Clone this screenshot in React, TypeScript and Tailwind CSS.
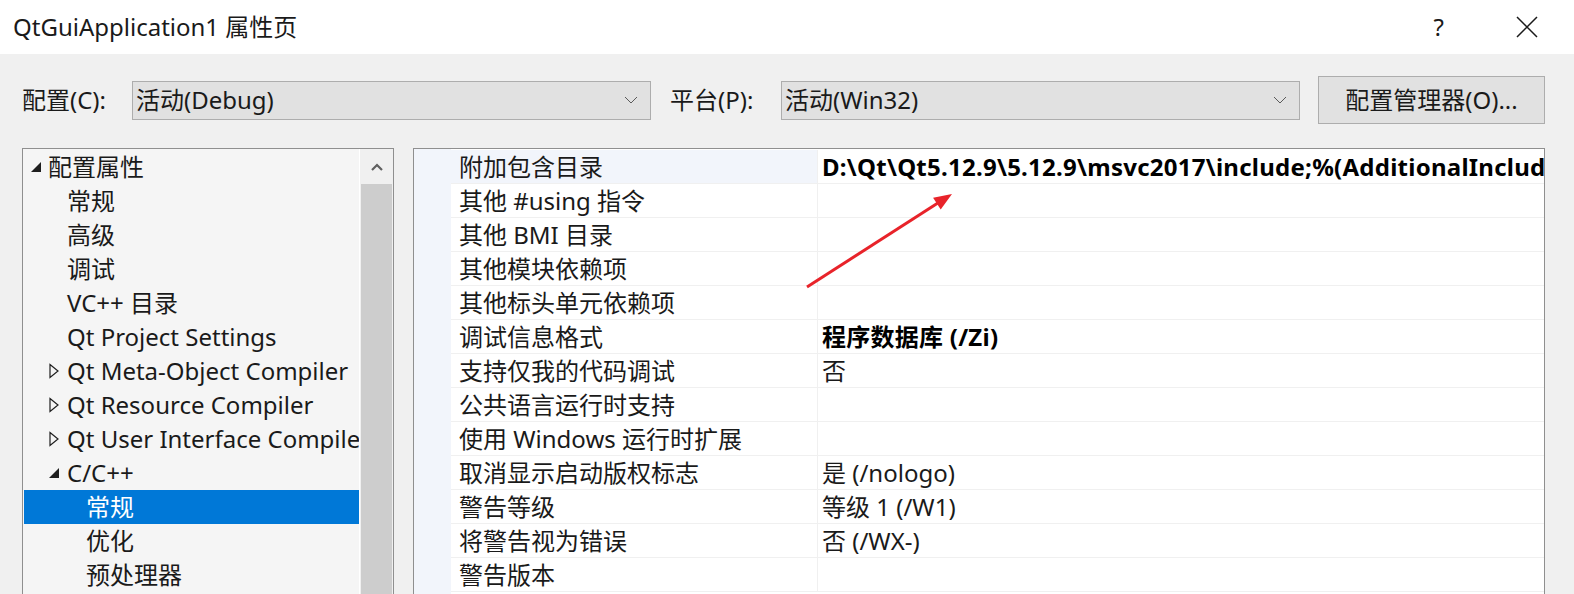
import React from "react";

type TreeItem = {
  label: string;
  level: number;
  expander?: "open" | "closed";
  selected?: boolean;
};

type Prop = {
  name: string;
  value?: string;
  bold?: boolean;
};

const tree: TreeItem[] = [
  { label: "配置属性", level: 0, expander: "open" },
  { label: "常规", level: 1 },
  { label: "高级", level: 1 },
  { label: "调试", level: 1 },
  { label: "VC++ 目录", level: 1 },
  { label: "Qt Project Settings", level: 1 },
  { label: "Qt Meta-Object Compiler", level: 1, expander: "closed" },
  { label: "Qt Resource Compiler", level: 1, expander: "closed" },
  { label: "Qt User Interface Compiler", level: 1, expander: "closed" },
  { label: "C/C++", level: 1, expander: "open" },
  { label: "常规", level: 2, selected: true },
  { label: "优化", level: 2 },
  { label: "预处理器", level: 2 },
];

const props: Prop[] = [
  {
    name: "附加包含目录",
    value: "D:\\Qt\\Qt5.12.9\\5.12.9\\msvc2017\\include;%(AdditionalIncludeDirectories)",
    bold: true,
  },
  { name: "其他 #using 指令" },
  { name: "其他 BMI 目录" },
  { name: "其他模块依赖项" },
  { name: "其他标头单元依赖项" },
  { name: "调试信息格式", value: "程序数据库 (/Zi)", bold: true },
  { name: "支持仅我的代码调试", value: "否" },
  { name: "公共语言运行时支持" },
  { name: "使用 Windows 运行时扩展" },
  { name: "取消显示启动版权标志", value: "是 (/nologo)" },
  { name: "警告等级", value: "等级 1 (/W1)" },
  { name: "将警告视为错误", value: "否 (/WX-)" },
  { name: "警告版本" },
];

function Chevron() {
  return (
    <svg width="14" height="8" viewBox="0 0 14 8" className="shrink-0">
      <polyline points="1,1 7,7 13,1" fill="none" stroke="#5a5a5a" strokeWidth="1" />
    </svg>
  );
}

function Combo({ text, width }: { text: string; width: string }) {
  return (
    <div
      className={`${width} h-[39px] flex items-center justify-between border border-[#adadad] bg-[#e1e1e1] pl-[3px] pr-[12px] text-[24px] leading-none`}
    >
      <span>{text}</span>
      <Chevron />
    </div>
  );
}

function Expander({ kind }: { kind: "open" | "closed" }) {
  if (kind === "open") {
    return (
      <svg width="12" height="12" viewBox="0 0 12 12" className="shrink-0">
        <polygon points="11,1 11,11 1,11" fill="#1e1e1e" />
      </svg>
    );
  }
  return (
    <svg width="12" height="16" viewBox="0 0 12 16" className="shrink-0">
      <polygon points="2,1.5 10,8 2,14.5" fill="none" stroke="#1e1e1e" strokeWidth="1.2" />
    </svg>
  );
}

export default function App() {
  return (
    <div
      className="relative w-[1574px] h-[594px] overflow-hidden bg-[#f0f0f0] text-[#1a1a1a]"
      style={{ fontFamily: "'Noto Sans', 'Noto Sans CJK SC', sans-serif" }}
    >
      {/* title bar */}
      <div className="h-[54px] bg-white flex items-center pl-[13px] pr-[36px]">
        <span className="text-[24px] leading-none">QtGuiApplication1 属性页</span>
        <span className="ml-auto text-[24px] leading-none mr-[72px]">?</span>
        <svg width="22" height="22" viewBox="0 0 22 22">
          <path d="M1 1 L21 21 M21 1 L1 21" stroke="#1a1a1a" strokeWidth="1.5" />
        </svg>
      </div>

      {/* config row */}
      <div className="h-[94px] flex items-center pl-[22px] pr-[29px] pb-[2px]">
        <span className="w-[110px] text-[24px] leading-none">配置(C):</span>
        <Combo text="活动(Debug)" width="w-[519px]" />
        <span className="ml-[19px] w-[111px] text-[24px] leading-none">平台(P):</span>
        <Combo text="活动(Win32)" width="w-[519px]" />
        <div className="ml-auto w-[227px] h-[48px] flex items-center justify-center border border-[#adadad] bg-[#e1e1e1] text-[24px] leading-none">
          配置管理器(O)...
        </div>
      </div>

      {/* panels */}
      <div className="flex pl-[22px] pr-[29px] gap-[19px]">
        {/* tree */}
        <div className="w-[372px] shrink-0 h-[460px] border border-[#8f8f8f] bg-[#f5f5f5] flex">
          <div className="flex-1 min-w-0 pt-[1px] pl-[1px] overflow-hidden">
            {tree.map((item, i) => (
              <div
                key={i}
                className={`h-[34px] flex items-center whitespace-nowrap text-[24px] leading-none ${
                  item.selected ? "bg-[#0078d7] text-white" : ""
                }`}
                style={{ paddingLeft: item.level === 0 ? 6 : item.level === 1 ? 24 : 62 }}
              >
                {item.level === 0 && item.expander && (
                  <span className="w-[18px] shrink-0 flex items-center">
                    <Expander kind={item.expander} />
                  </span>
                )}
                {item.level === 1 && (
                  <span className="w-[19px] shrink-0 flex items-center">
                    {item.expander && <Expander kind={item.expander} />}
                  </span>
                )}
                <span>{item.label}</span>
              </div>
            ))}
          </div>
          <div className="w-[34px] shrink-0 border-l border-white bg-[#f0f0f0] flex flex-col">
            <div className="h-[35px] flex items-center justify-center">
              <svg width="12" height="8" viewBox="0 0 12 8">
                <polyline points="1,7 6,2 11,7" fill="none" stroke="#606060" strokeWidth="2.2" />
              </svg>
            </div>
            <div className="flex-1 mx-[1px] bg-[#cdcdcd]" />
          </div>
        </div>

        {/* property grid */}
        <div className="flex-1 min-w-0 h-[460px] border border-[#8f8f8f] bg-white flex overflow-hidden">
          <div className="w-[37px] shrink-0 bg-[#f2f5fb]" />
          <div className="flex-1 min-w-0 pt-[1px] overflow-hidden">
            {props.map((p, i) => (
              <div key={i} className="h-[34px] flex border-b border-[#f0f0f0] text-[24px] leading-none">
                <div
                  className={`w-[367px] shrink-0 flex items-center pl-[8px] border-r border-[#f0f0f0] whitespace-nowrap ${
                    i === 0 ? "bg-[#f2f5fb]" : ""
                  }`}
                >
                  {p.name}
                </div>
                <div
                  className={`flex-1 min-w-0 flex items-center pl-[4px] whitespace-nowrap overflow-hidden ${
                    p.bold ? "font-bold text-black tracking-[0.25px]" : ""
                  }`}
                >
                  {p.value}
                </div>
              </div>
            ))}
          </div>
        </div>
      </div>

      {/* annotation arrow */}
      <svg className="absolute left-0 top-0 pointer-events-none" width="1574" height="594">
        <line x1="807" y1="287" x2="941" y2="201" stroke="#e8232a" strokeWidth="3" />
        <polygon points="952,194 940.7,209.6 933.1,197.8" fill="#e8232a" />
      </svg>
    </div>
  );
}
